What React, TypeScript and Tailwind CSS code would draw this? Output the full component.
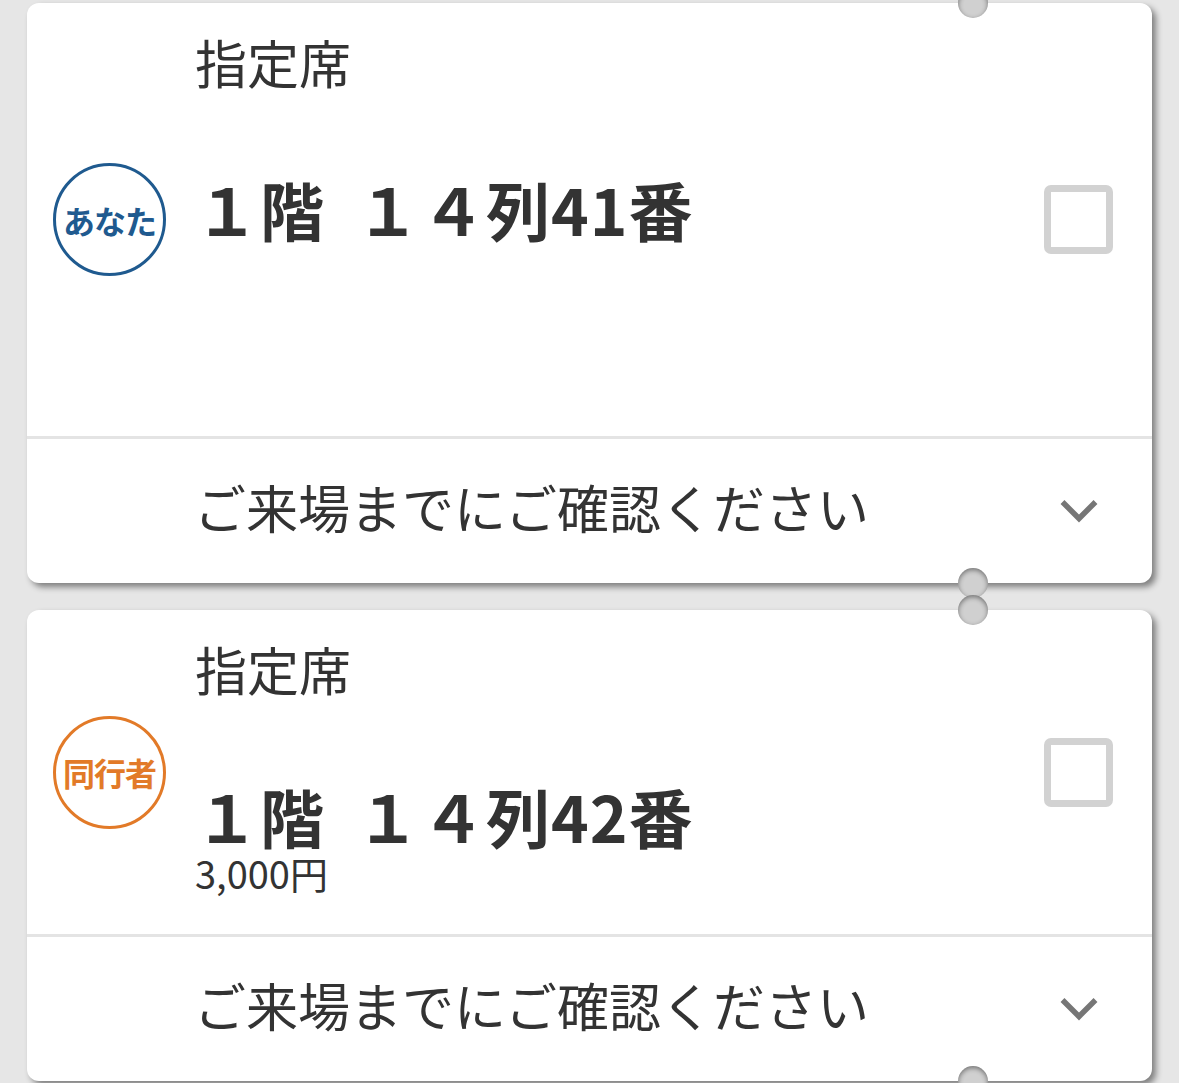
import React from "react"

type Ticket = {
  badge: string
  tone: "blue" | "orange"
  seat: string
  price?: string
  topHeight: string
}

const tickets: Ticket[] = [
  { badge: "あなた", tone: "blue", seat: "１階  １４列41番", topHeight: "h-[433px]" },
  { badge: "同行者", tone: "orange", seat: "１階  １４列42番", price: "3,000円", topHeight: "h-[324px]" },
]

function Notch({ side }: { side: "top" | "bottom" }) {
  return (
    <span
      className={
        "pointer-events-none absolute left-[931px] z-10 h-[30px] w-[30px] rounded-full bg-[#d0d0d0] shadow-[inset_0_2px_5px_rgba(0,0,0,0.45)] " +
        (side === "top" ? "-top-[15px]" : "-bottom-[15px]")
      }
    />
  )
}

function TicketCard({ t }: { t: Ticket }) {
  const ring = t.tone === "blue" ? "border-[#1f5a8f] text-[#1f5a8f]" : "border-[#e27a28] text-[#e27a28]"
  return (
    <div className="relative rounded-[12px] bg-white shadow-[4px_4px_6px_rgba(0,0,0,0.45)]">
      <Notch side="top" />
      <Notch side="bottom" />

      {/* seat block */}
      <div className={`flex items-center pl-[26px] pr-[39px] ${t.topHeight}`}>
        <div
          className={`flex h-[113px] w-[113px] shrink-0 items-center justify-center rounded-full border-[3px] text-[32px] font-bold tracking-[-1px] ${ring}`}
        >
          {t.badge}
        </div>
        <div className="ml-[29px] flex flex-1 flex-col self-stretch pt-[29px] text-[#333]">
          <p className="text-[52px] leading-[60px]">指定席</p>
          <p className="mt-[82px] whitespace-pre text-[64px] font-bold leading-[68px] tracking-[1px]">{t.seat}</p>
          {t.price && <p className="mt-[2px] text-[38px] leading-[44px]">{t.price}</p>}
        </div>
        <div className="h-[69px] w-[69px] shrink-0 rounded-[7px] border-[7px] border-[#d2d2d2]" />
      </div>

      <div className="h-[3px] bg-[#e4e4e4]" />

      {/* notice */}
      <div className="flex h-[144px] items-center justify-between pl-[167px] pr-[54px]">
        <p className="mb-[9px] text-[52px] leading-[60px] text-[#333]">ご来場までにご確認ください</p>
        <svg width="38" height="24" viewBox="0 0 38 24" fill="none">
          <polyline points="2.5,3 19,19.5 35.5,3" stroke="#767676" strokeWidth="5.5" />
        </svg>
      </div>
    </div>
  )
}

export default function App() {
  return (
    <div className="flex min-h-screen flex-col gap-[27px] bg-[#e6e6e6] px-[27px] pt-[3px] font-['Noto_Sans_CJK_JP','Noto_Sans',sans-serif]">
      {tickets.map((t) => (
        <TicketCard key={t.badge} t={t} />
      ))}
    </div>
  )
}
